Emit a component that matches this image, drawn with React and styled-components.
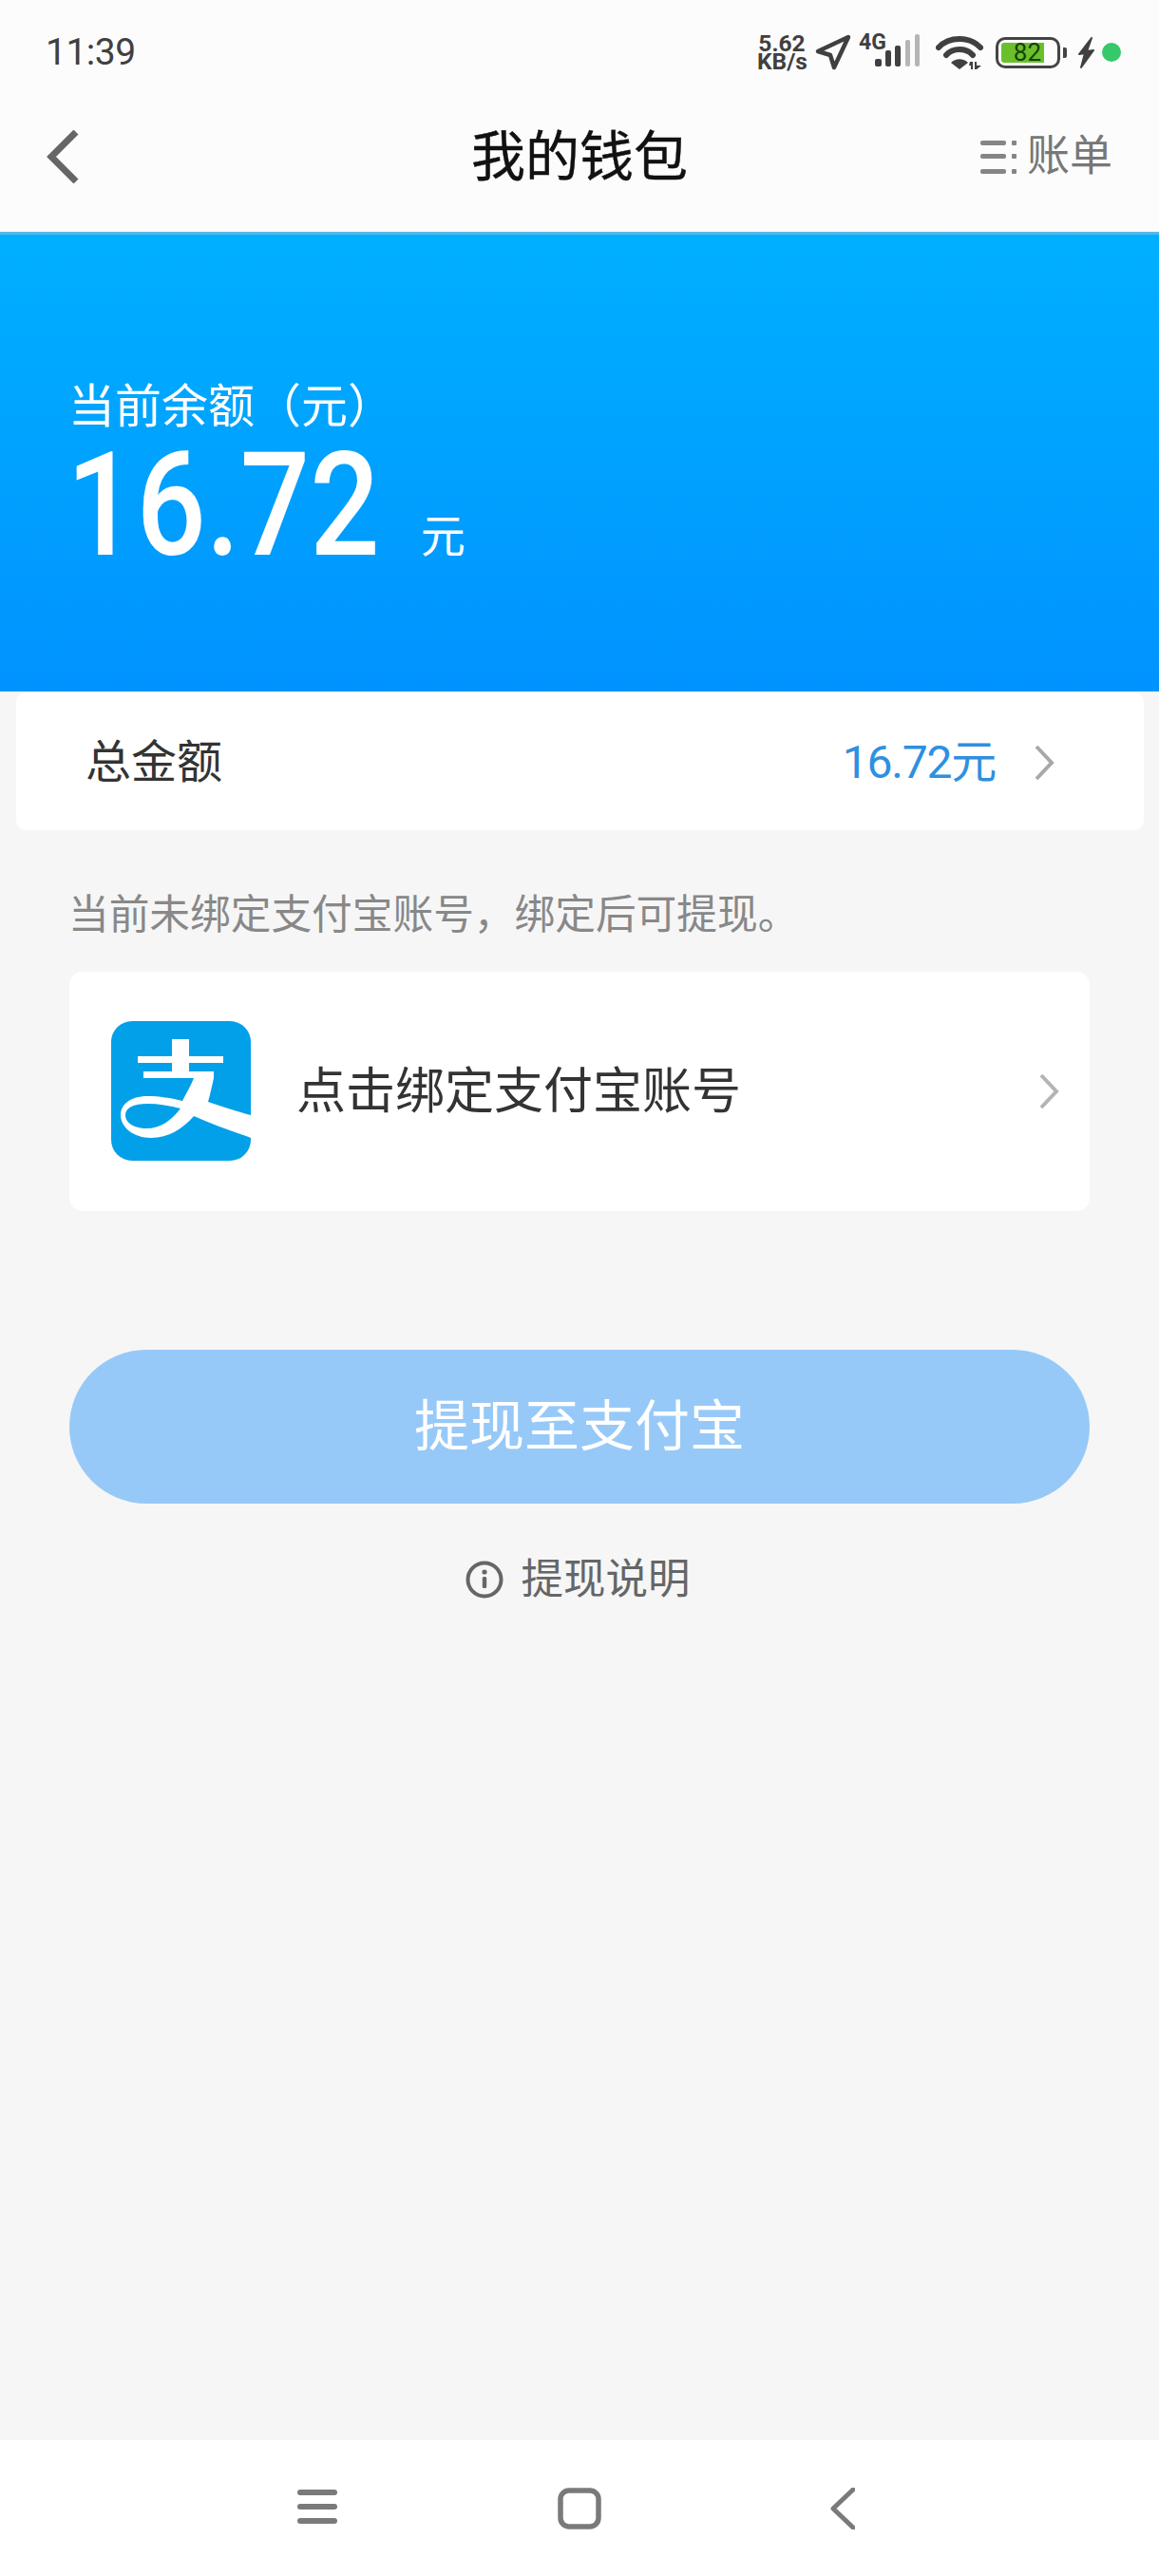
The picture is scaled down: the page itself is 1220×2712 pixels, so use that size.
import React from "react";
import styled, { createGlobalStyle } from "styled-components";

const Global = createGlobalStyle`
  html, body { margin: 0; padding: 0; background: #f6f6f6; }
  * { box-sizing: border-box; }
  body { font-family: Roboto, "Noto Sans CJK SC", sans-serif; }
`;

const Page = styled.div`
  width: 1220px;
  height: 2712px;
  display: flex;
  flex-direction: column;
  background: #f6f6f6;
  overflow: hidden;
`;

const Header = styled.header`
  height: 247px;
  background: #fcfcfc;
  border-bottom: 3px solid #5ab8e8;
  display: flex;
  flex-direction: column;
`;

const StatusBar = styled.div`
  height: 110px;
  padding: 0 40px 0 48px;
  display: flex;
  align-items: center;
  justify-content: space-between;
`;

const Time = styled.span`
  font-size: 39px;
  line-height: 1;
  color: #404040;
  letter-spacing: -0.5px;
`;

const StatusIcons = styled.div`
  display: flex;
  align-items: center;
  color: #404040;
`;

const Speed = styled.div`
  width: 52px;
  margin-right: 8px;
  font-size: 24.5px;
  font-weight: 700;
  line-height: 19px;
  color: #404040;
  text-align: center;
  white-space: nowrap;
`;

const SignalGroup = styled.div`
  position: relative;
  width: 64px;
  height: 38px;
  margin: 0 17px 0 8px;
  display: flex;
  justify-content: flex-end;
`;

const NetLabel = styled.span`
  position: absolute;
  left: 0;
  top: -1px;
  font-size: 23px;
  line-height: 20px;
  font-weight: 700;
  color: #404040;
`;

const Battery = styled.div`
  width: 68px;
  height: 33px;
  margin-left: 13px;
  padding: 3px;
  border: 3.5px solid #444;
  border-radius: 10px;
  display: flex;
`;

const BatteryFill = styled.div`
  width: 45px;
  background: #6ac02a;
  color: #17400c;
  font-size: 26px;
  line-height: 21px;
  text-align: right;
  padding-right: 3px;
  border-radius: 3px 0 0 3px;
`;

const BatteryNub = styled.div`
  width: 4px;
  height: 11px;
  margin: 0 11px 0 3px;
  background: #444;
  border-radius: 0 2px 2px 0;
`;

const LiveDot = styled.div`
  width: 20px;
  height: 20px;
  margin-left: 7px;
  border-radius: 50%;
  background: #35c96b;
`;

const NavBar = styled.div`
  height: 110px;
  padding: 0 49px;
  display: flex;
  align-items: center;
  justify-content: space-between;
  position: relative;
`;

const Title = styled.h1`
  position: absolute;
  left: 0;
  right: 0;
  top: 1px;
  margin: 0;
  text-align: center;
  font-size: 57px;
  font-weight: 400;
  line-height: 110px;
  color: #111;
  -webkit-text-stroke: 0.4px #111;
`;

const BillLink = styled.div`
  display: flex;
  align-items: center;
  gap: 11px;
  color: #777;
  font-size: 45px;
  line-height: 60px;
`;

const Hero = styled.section`
  height: 481px;
  padding: 154px 0 0 72px;
  background: linear-gradient(180deg, #00b0ff 0%, #0093ff 100%);
  color: #fff;
`;

const HeroLabel = styled.div`
  font-size: 49px;
  line-height: 56px;
`;

const AmountRow = styled.div`
  display: flex;
  align-items: flex-end;
  height: 140px;
  margin-top: 5px;
`;

const Amount = styled.span`
  display: inline-block;
  font-size: 152px;
  line-height: 140px;
  font-weight: 500;
  margin-left: -2px;
  margin-right: -15px;
  transform: scaleX(0.85);
  transform-origin: left center;
`;

const AmountUnit = styled.span`
  font-size: 47px;
  line-height: 50px;
  margin-bottom: 12px;
`;

const Card = styled.div`
  margin: 1px 16px 0 17px;
  height: 145px;
  padding: 2px 93px 0 73px;
  background: #fff;
  border-radius: 10px;
  display: flex;
  align-items: center;
  justify-content: space-between;
`;

const CardLabel = styled.span`
  font-size: 48px;
  color: #333;
  line-height: 60px;
`;

const CardValue = styled.div`
  display: flex;
  align-items: center;
  gap: 39px;
  color: #2f8fe0;
  font-size: 48px;
  line-height: 60px;
  letter-spacing: -1.2px;
`;

const Hint = styled.p`
  margin: 61px 0 0 72px;
  font-size: 42.7px;
  line-height: 56px;
  color: #888;
  white-space: nowrap;
`;

const BindCard = styled.div`
  margin: 32px 73px 0;
  height: 252px;
  padding: 0 31px 1px 44px;
  background: #fff;
  border-radius: 14px;
  display: flex;
  align-items: center;
`;

const BindText = styled.span`
  flex: 1;
  margin: 3px 0 0 48px;
  font-size: 52px;
  line-height: 64px;
  color: #333;
`;

const WithdrawButton = styled.button`
  display: block;
  margin: 146px 73px 0;
  width: 1074px;
  height: 162px;
  border: 0;
  border-radius: 81px;
  background: #97c9f8;
  color: #fff;
  font-family: inherit;
  font-size: 58px;
  line-height: 70px;
`;

const InfoRow = styled.div`
  margin-top: 50px;
  padding-right: 3px;
  display: flex;
  align-items: center;
  justify-content: center;
  gap: 18px;
  color: #666;
  font-size: 44.5px;
  line-height: 60px;
`;

const BottomNav = styled.nav`
  margin-top: auto;
  height: 143px;
  background: #fff;
  display: grid;
  grid-template-columns: repeat(3, 276px);
  justify-content: center;
  padding-top: 50px;
`;

const NavSlot = styled.div`
  display: flex;
  justify-content: center;
`;

const Chevron = ({ w, h, color, sw }) => (
  <svg width={w} height={h} viewBox={`0 0 ${w} ${h}`} fill="none">
    <path d={`M${sw} ${sw} L${w - sw} ${h / 2} L${sw} ${h - sw}`} stroke={color} strokeWidth={sw} />
  </svg>
);

const BackChevron = () => (
  <svg width="34" height="56" viewBox="0 0 34 56" fill="none">
    <path d="M31 2 L5 28 L31 54" stroke="#666" strokeWidth="7" />
  </svg>
);

const Alipay = () => (
  <svg width="147" height="147" viewBox="0 0 147 147">
    <rect width="147" height="147" rx="22" fill="#03a0ea" />
    <path fill="#fff" d="M64 19H82V37H118V44H82V53H108V60C106 69 104 78 102 85C116 90 132 95 147 99V123C128 116 107 109 87 100C76 113 60 123 42 123C24 123 10 112 10 99C10 88 20 79 38 79C50 79 64 81 75 84C79 76 84 68 87 60H34V53H64V44H28V37H64ZM73 92C62 89 50 87 38 87C24 87 15 91 15 99C15 108 26 113 37 113C52 113 63 105 73 92Z" fillRule="evenodd" />
  </svg>
);

export default function App() {
  return (
    <Page>
      <Global />
      <Header>
        <StatusBar>
          <Time>11:39</Time>
          <StatusIcons>
            <Speed>5.62<br />KB/s</Speed>
            <svg width="39" height="38" viewBox="0 0 39 38" fill="none">
              <path d="M36 3 L4 18 L17 22 L21 35 Z" stroke="#404040" strokeWidth="4.5" strokeLinejoin="round" />
            </svg>
            <SignalGroup>
              <NetLabel>4G</NetLabel>
              <svg width="47" height="34" viewBox="0 0 47 34">
                <rect x="0" y="26" width="7" height="8" rx="2" fill="#404040" />
                <rect x="11" y="17" width="6" height="17" rx="2" fill="#404040" />
                <rect x="21" y="12" width="6" height="22" rx="2" fill="#404040" />
                <rect x="32" y="6" width="5" height="28" rx="2" fill="#b5b5b5" />
                <rect x="42" y="0" width="5" height="34" rx="2" fill="#b5b5b5" />
              </svg>
            </SignalGroup>
            <svg width="50" height="36" viewBox="0 0 50 36" fill="none">
              <path d="M3 13 C14 1 36 1 47 13" stroke="#404040" strokeWidth="6" strokeLinecap="round" />
              <path d="M11 21 C18 13 32 13 39 21" stroke="#404040" strokeWidth="6" strokeLinecap="round" />
              <path d="M16 29 C21 24 29 24 34 29 L25 36 Z" fill="#404040" />
              <path d="M36 28 L39 28 L39 36 L37 36 L37 32 L35 32 Z M41 36 L41 28 L43 28 L43 32 L48 32 L43 36 Z" fill="#404040" />
            </svg>
            <Battery>
              <BatteryFill>82</BatteryFill>
            </Battery>
            <BatteryNub />
            <svg width="19" height="33" viewBox="0 0 19 33">
              <path d="M15 1 L2 18 L8 17 L4 32 L17 14 L10 15 Z" fill="#404040" stroke="#404040" strokeWidth="2" strokeLinejoin="round" />
            </svg>
            <LiveDot />
          </StatusIcons>
        </StatusBar>
        <NavBar>
          <BackChevron />
          <Title>我的钱包</Title>
          <BillLink>
            <svg width="38" height="36" viewBox="0 0 38 36">
              <g fill="#858585">
                <rect x="0" y="1" width="27" height="5" rx="2" />
                <rect x="0" y="15" width="27" height="5" rx="2" />
                <rect x="0" y="31" width="27" height="5" rx="2" />
                <rect x="33" y="1" width="5" height="5" rx="1" />
                <rect x="33" y="15" width="5" height="5" rx="1" />
                <rect x="33" y="31" width="5" height="5" rx="1" />
              </g>
            </svg>
            账单
          </BillLink>
        </NavBar>
      </Header>
      <Hero>
        <HeroLabel>当前余额（元）</HeroLabel>
        <AmountRow>
          <Amount>16.72</Amount>
          <AmountUnit>元</AmountUnit>
        </AmountRow>
      </Hero>
      <Card>
        <CardLabel>总金额</CardLabel>
        <CardValue>
          16.72元
          <Chevron w={24} h={42} color="#a8a8a8" sw={4} />
        </CardValue>
      </Card>
      <Hint>当前未绑定支付宝账号，绑定后可提现。</Hint>
      <BindCard>
        <Alipay />
        <BindText>点击绑定支付宝账号</BindText>
        <Chevron w={24} h={42} color="#b4b4b4" sw={4} />
      </BindCard>
      <WithdrawButton>提现至支付宝</WithdrawButton>
      <InfoRow>
        <svg width="40" height="40" viewBox="0 0 40 40" fill="none">
          <circle cx="20" cy="20" r="17.5" stroke="#666" strokeWidth="4" />
          <circle cx="20" cy="12" r="2.6" fill="#666" />
          <rect x="17.8" y="17" width="4.4" height="12" rx="1.5" fill="#666" />
        </svg>
        提现说明
      </InfoRow>
      <BottomNav>
        <NavSlot>
          <svg width="42" height="40" viewBox="0 0 42 40">
            <g fill="#7a7a7a">
              <rect x="0" y="2" width="42" height="6" rx="3" />
              <rect x="0" y="17" width="42" height="6" rx="3" />
              <rect x="0" y="32" width="42" height="6" rx="3" />
            </g>
          </svg>
        </NavSlot>
        <NavSlot>
          <svg width="46" height="44" viewBox="0 0 46 44" fill="none">
            <rect x="3" y="3" width="40" height="38" rx="9" stroke="#7a7a7a" strokeWidth="5.5" />
          </svg>
        </NavSlot>
        <NavSlot>
          <svg width="27" height="44" viewBox="0 0 27 44" fill="none">
            <path d="M25 2 L4 22 L25 42" stroke="#7a7a7a" strokeWidth="5" strokeLinecap="round" strokeLinejoin="round" />
          </svg>
        </NavSlot>
      </BottomNav>
    </Page>
  );
}
